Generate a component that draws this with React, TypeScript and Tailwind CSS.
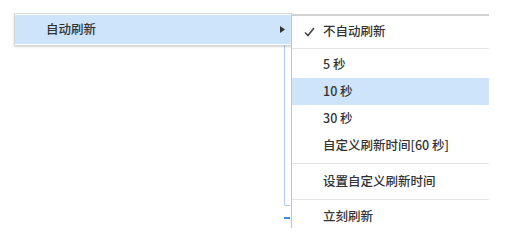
import React from "react";

const font = { fontFamily: '"Noto Sans CJK SC", "Noto Sans", sans-serif' };

function Row({ label, active, check, h = "h-[27px]" }: { label: string; active?: boolean; check?: boolean; h?: string }) {
  return (
    <div className={`relative flex items-center pl-[31px] ${h} ${active ? "bg-[#cde4fa]" : ""}`}>
      {check && (
        <svg className="absolute left-[12px] top-1/2 -translate-y-1/2" width="11" height="10" viewBox="0 0 11 10">
          <path d="M1 5.5 L4 8.5 L10 1" fill="none" stroke="#444" strokeWidth="1.6" />
        </svg>
      )}
      <span className="text-[12.5px] leading-none font-medium text-[#333]">{label}</span>
    </div>
  );
}

function Sep({ cls }: { cls: string }) {
  return <div className={`${cls} h-px bg-[#e4e4e4]`} />;
}

export default function App() {
  return (
    <div className="relative w-[511px] h-[250px] bg-white overflow-hidden" style={font}>
      {/* background window fragments */}
      <div className="absolute left-[284px] top-[44px] w-[6px] h-[162px] border-l border-b border-[#b3cdef]" />
      <div className="absolute left-[284px] top-[217px] w-[6px] h-[2px] bg-[#3b8de4]" />

      {/* parent menu item */}
      <div className="absolute left-[14px] top-[13px] w-[278px] h-[32px] border-l border-t border-[#d6d6d6] bg-white shadow-[0_2px_2px_rgba(0,0,0,0.18)] pt-[1px]">
        <div className="flex items-center h-[29px] bg-[#cde4fa] pl-[31px] pr-[5px]">
          <span className="text-[12.5px] leading-none font-medium text-[#333] flex-1">自动刷新</span>
          <svg width="5" height="7" viewBox="0 0 5 7" className="mr-[2px]">
            <path d="M0 0 L5 3.5 L0 7 Z" fill="#333" />
          </svg>
        </div>
      </div>

      {/* submenu */}
      <div className="absolute left-[291px] top-[14px] w-[198px] h-[214px] bg-white border-t-2 border-l border-t-[#d2d2d2] border-l-[#c4c4c4] flex flex-col">
        <Row label="不自动刷新" check h="h-[31px]" />
        <Sep cls="mt-[1px] mb-[2px]" />
        <Row label="5 秒" />
        <Row label="10 秒" active />
        <Row label="30 秒" />
        <Row label="自定义刷新时间[60 秒]" />
        <Sep cls="mt-[4px] mb-[4px]" />
        <Row label="设置自定义刷新时间" />
        <Sep cls="mt-[4px] mb-[4px]" />
        <Row label="立刻刷新" h="h-[24px]" />
      </div>
    </div>
  );
}
